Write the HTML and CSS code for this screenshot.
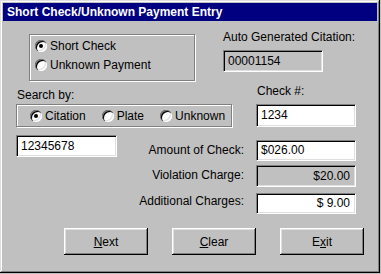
FILE: index.html
```html
<!DOCTYPE html>
<html lang="en">
<head>
  <meta charset="UTF-8" />
  <title>Short Check/Unknown Payment Entry</title>
  <link rel="stylesheet" href="styles.css">
</head>
<body>

  <div class="window">
    <div class="titlebar">Short Check/Unknown Payment Entry</div>

    <div class="content">
      <!-- payment type + generated citation -->
      <div class="top">
        <div class="groupbox type-box">
          <label class="option"><span class="radio checked"></span>Short Check</label>
          <label class="option"><span class="radio"></span>Unknown Payment</label>
        </div>
        <div class="auto">
          <div class="label">Auto Generated Citation:</div>
          <div class="field readonly cite-auto">00001154</div>
        </div>
      </div>

      <!-- search and amounts -->
      <div class="fields">
        <div class="label search-label">Search by:</div>
        <div class="label">Check #:</div>

        <div class="groupbox search-box">
          <label class="option"><span class="radio checked"></span>Citation</label>
          <label class="option"><span class="radio"></span>Plate</label>
          <label class="option"><span class="radio"></span>Unknown</label>
        </div>
        <div class="field">1234</div>

        <div class="cite-row">
          <div class="field cite-num">12345678</div>
          <div class="label row-label">Amount of Check:</div>
        </div>
        <div class="field amount">$026.00</div>

        <div class="label row-label">Violation Charge:</div>
        <div class="field readonly money">$20.00</div>

        <div class="label row-label">Additional Charges:</div>
        <div class="field money">$ 9.00</div>
      </div>

      <div class="buttons">
        <button><u>N</u>ext</button>
        <button><u>C</u>lear</button>
        <button>E<u>x</u>it</button>
      </div>
    </div>
  </div>

</body>
</html>
```

FILE: styles.css
```css
body {
  margin: 0;
  background: #c0c0c0;
  font-family: "Liberation Sans", Arial, sans-serif;
  font-size: 12px;
  color: #000;
}
.window {
  width: 380px;
  height: 273px;
  box-sizing: border-box;
  padding: 3px 3px 0 3px;
  background: #c0c0c0;
  box-shadow: inset -1px -1px #000, inset 1px 1px #dfdfdf, inset -2px -2px #808080, inset 2px 2px #fff;
}
.titlebar {
  height: 18px;
  line-height: 18px;
  background: #000080;
  color: #fff;
  font-weight: bold;
  padding-left: 4px;
}
.label {
  line-height: 14px;
  white-space: nowrap;
}
.top {
  display: flex;
  margin: 9px 0 0 26px;
}
.groupbox {
  box-sizing: border-box;
  border: 1px solid #808080;
  box-shadow: inset 1px 1px #fff, 1px 1px #fff;
}
.type-box {
  width: 166px;
  height: 47px;
  margin-top: 4px;
  padding: 5px 0 0 5px;
  display: flex;
  flex-direction: column;
  gap: 7px;
}
.option {
  display: flex;
  align-items: center;
  gap: 3px;
  line-height: 12px;
  white-space: nowrap;
}
.radio {
  position: relative;
  width: 12px;
  height: 12px;
  border-radius: 50%;
  background: #fff;
  box-shadow: inset 1px 1px #808080, inset 2px 2px #000, inset -1px -1px #fff, inset -2px -2px #dfdfdf;
  flex: none;
}
.radio.checked::after {
  content: "";
  position: absolute;
  left: 4px;
  top: 4px;
  width: 4px;
  height: 4px;
  border-radius: 50%;
  background: #000;
}
.auto {
  margin-left: 28px;
}
.field {
  box-sizing: border-box;
  height: 21px;
  line-height: 19px;
  padding: 0 4px;
  background: #fff;
  border-top: 1px solid #808080;
  border-left: 1px solid #808080;
  border-right: 1px solid #fff;
  border-bottom: 1px solid #fff;
  box-shadow: inset 1px 1px #000, inset -1px -1px #dfdfdf;
  white-space: nowrap;
}
.field.readonly {
  background: #c0c0c0;
}
.cite-auto {
  width: 100px;
  height: 22px;
  line-height: 20px;
  margin-top: 6px;
}
.fields {
  display: grid;
  grid-template-columns: 228px 100px;
  column-gap: 12px;
  margin: 3px 0 0 13px;
}
.fields > .label {
  margin-left: 1px;
}
.search-label {
  padding-top: 4px;
}
.search-box {
  width: 216px;
  height: 23px;
  margin-top: 2px;
  display: flex;
  align-items: center;
  gap: 16px;
  padding-left: 13px;
}
.fields .field {
  margin-top: 2px;
  height: 23px;
  line-height: 21px;
}
.cite-row {
  display: flex;
  justify-content: space-between;
  align-items: flex-end;
  height: 26px;
  margin-top: 8px;
}
.fields .cite-num {
  width: 101px;
  height: 22px;
  line-height: 20px;
  margin: 0;
  align-self: flex-start;
}
.row-label {
  line-height: 21px;
  text-align: right;
}
.fields .amount {
  margin-top: 13px;
  height: 21px;
  line-height: 19px;
}
.fields > .row-label:not(.cite-row *) {
  margin-top: 4px;
}
.fields .money {
  margin-top: 4px;
  height: 22px;
  line-height: 20px;
  text-align: right;
  padding-right: 5px;
}
.fields > .label:nth-last-of-type(1) {
  margin-top: 6px;
}
.fields .money:last-child {
  margin-top: 6px;
  height: 21px;
  line-height: 19px;
}
.buttons {
  display: flex;
  gap: 24px;
  margin: 14px 0 0 61px;
}
button {
  width: 84px;
  height: 27px;
  font-family: inherit;
  font-size: 12px;
  color: #000;
  background: #c0c0c0;
  border: none;
  box-shadow: inset -1px -1px #000, inset 1px 1px #fff, inset -2px -2px #808080, inset 2px 2px #dfdfdf;
  padding: 0;
}
```
